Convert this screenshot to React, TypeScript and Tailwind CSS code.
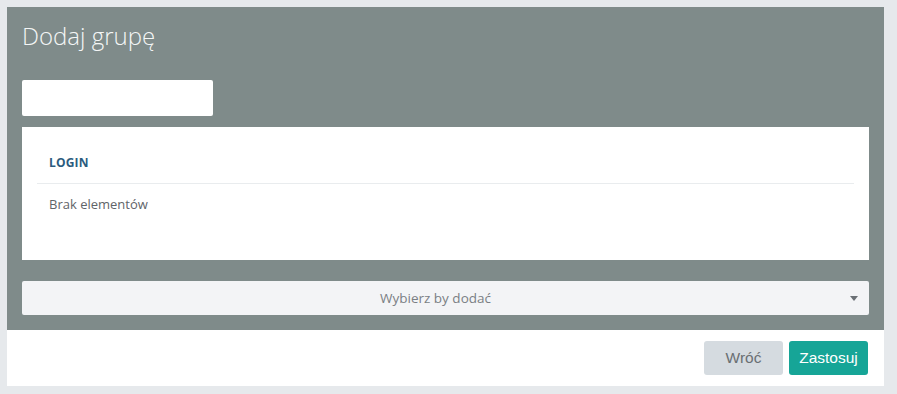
export default function App() {
  return (
    <div className="w-[897px] h-[394px] bg-[#e6e9ec] pt-[7px] pl-[7px] font-['Open_Sans',sans-serif]">
      <div className="w-[877px] flex flex-col">
        {/* body */}
        <div className="h-[323px] bg-[#7f8b8a] px-[15px] pt-[12px] flex flex-col">
          <h1 className="text-[24px] leading-[34px] font-light text-[#f4f6f6]">Dodaj grupę</h1>
          <input
            type="text"
            className="mt-[27px] w-[191px] h-[36px] bg-white rounded-[2px] outline-none"
          />
          <div className="mt-[11px] h-[133px] bg-white px-[15px]">
            <div className="pt-[28px] pb-[12px] pl-[12px] border-b border-[#e9ecee]">
              <span className="block text-[12px] leading-4 font-bold text-[#2b5b7e] tracking-[0.2px]">
                LOGIN
              </span>
            </div>
            <div className="pt-[11px] pl-[12px] text-[13px] leading-[18px] text-[#5f6468]">
              Brak elementów
            </div>
          </div>
          <div className="mt-[21px] h-[34px] bg-[#f3f4f6] rounded-[2px] flex items-center relative">
            <span className="flex-1 text-center pr-[20px] text-[13.5px] text-[#7a7f84]">
              Wybierz by dodać
            </span>
            <svg className="absolute right-[11px] top-[15px]" width="8" height="5" viewBox="0 0 8 5">
              <path d="M0 0 L8 0 L4 5 Z" fill="#6b7075" />
            </svg>
          </div>
        </div>
        {/* footer */}
        <div className="h-[56px] bg-white flex items-center justify-end gap-[6px] pr-[16px] font-['Liberation_Sans',Arial,sans-serif]">
          <button className="w-[79px] h-[34px] rounded-[3px] bg-[#d5dbe0] text-[#6a6f73] text-[15.5px]">
            Wróć
          </button>
          <button className="w-[79px] h-[34px] rounded-[3px] bg-[#16a597] text-white text-[15.5px]">
            Zastosuj
          </button>
        </div>
      </div>
    </div>
  );
}
